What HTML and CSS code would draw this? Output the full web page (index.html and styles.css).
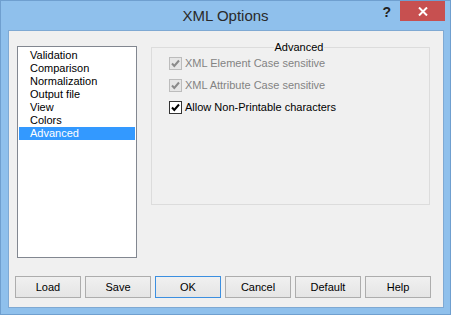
FILE: index.html
```html
<!DOCTYPE html>
<html lang="en">
<head>
    <meta charset="UTF-8">
    <title>XML Options</title>
    <link rel="stylesheet" href="styles.css">
</head>
<body>
    <div class="window">
        <div class="titlebar">
            <div></div>
            <div class="title">XML Options</div>
            <div class="controls">
                <span class="help-btn">?</span>
                <span class="close-btn">
                    <svg width="10" height="9" viewBox="0 0 10 9">
                        <path d="M1 0.5 L9 8.5 M9 0.5 L1 8.5" stroke="#fff" stroke-width="2"/>
                    </svg>
                </span>
            </div>
        </div>

        <div class="client">
            <div class="main">
                <ul class="page-list">
                    <li>Validation</li>
                    <li>Comparison</li>
                    <li>Normalization</li>
                    <li>Output file</li>
                    <li>View</li>
                    <li>Colors</li>
                    <li class="selected">Advanced</li>
                </ul>

                <fieldset class="group">
                    <legend>Advanced</legend>
                    <div class="check-row disabled">
                        <span class="check">
                            <svg width="11" height="11" viewBox="0 0 11 11"><path d="M2 5.5 L4.3 8 L9 2.5" fill="none" stroke="#8a8a8a" stroke-width="2"/></svg>
                        </span>
                        XML Element Case sensitive
                    </div>
                    <div class="check-row disabled">
                        <span class="check">
                            <svg width="11" height="11" viewBox="0 0 11 11"><path d="M2 5.5 L4.3 8 L9 2.5" fill="none" stroke="#8a8a8a" stroke-width="2"/></svg>
                        </span>
                        XML Attribute Case sensitive
                    </div>
                    <div class="check-row">
                        <span class="check">
                            <svg width="11" height="11" viewBox="0 0 11 11"><path d="M2 5.5 L4.3 8 L9 2.5" fill="none" stroke="#000" stroke-width="2"/></svg>
                        </span>
                        Allow Non-Printable characters
                    </div>
                </fieldset>
            </div>

            <div class="buttons">
                <button type="button" class="btn">Load</button>
                <button type="button" class="btn">Save</button>
                <button type="button" class="btn default-btn">OK</button>
                <button type="button" class="btn">Cancel</button>
                <button type="button" class="btn">Default</button>
                <button type="button" class="btn">Help</button>
            </div>
        </div>
    </div>
</body>
</html>
```

FILE: styles.css
```css
body {
    margin: 0;
    padding: 0;
    font-family: "Liberation Sans", Arial, sans-serif;
    font-size: 11px;
    background-color: #fff;
}

.window {
    width: 451px;
    height: 315px;
    box-sizing: border-box;
    border: 1px solid #6f9fcf;
    background: #8fc0ec;
    display: flex;
    flex-direction: column;
}

.titlebar {
    height: 29px;
    display: grid;
    grid-template-columns: 1fr auto 1fr;
}

.title {
    font-size: 15px;
    color: #2a2a2a;
    line-height: 29px;
}

.controls {
    justify-self: end;
    display: flex;
    align-items: flex-start;
    margin-right: 5px;
}

.help-btn {
    font-weight: bold;
    font-size: 14px;
    color: #222;
    margin-right: 9px;
    margin-top: 3px;
}

.close-btn {
    width: 45px;
    height: 20px;
    background: #c75050;
    display: flex;
    align-items: center;
    justify-content: center;
}

.client {
    flex: 1;
    margin: 0 6px 6px 7px;
    border: 1px solid #7fa9d3;
    background: #f0f0f0;
    padding: 9px 8px 9px 8px;
    display: flex;
    flex-direction: column;
}

.main {
    display: flex;
    gap: 14px;
}

.page-list {
    list-style: none;
    margin: 6px 0 0 0;
    padding: 2px 1px;
    width: 120px;
    height: 212px;
    box-sizing: border-box;
    border: 1px solid #828790;
    background: #fff;
}

.page-list li {
    height: 13px;
    line-height: 13px;
    padding-left: 11px;
    color: #000;
}

.page-list li.selected {
    background: #3399ff;
    color: #fff;
}

.group {
    margin: 0;
    width: 279px;
    height: 165px;
    box-sizing: border-box;
    border: 1px solid #dcdcdc;
    padding: 0 0 0 17px;
    display: flex;
    flex-direction: column;
    gap: 4px;
}

.group legend {
    margin: 0 auto;
    padding: 0 1px;
    line-height: 14px;
    color: #000;
}

.check-row {
    height: 18px;
    display: flex;
    align-items: center;
    color: #000;
}

.check {
    width: 13px;
    height: 13px;
    box-sizing: border-box;
    border: 1px solid #333;
    background: #fff;
    margin-right: 3px;
    display: flex;
    align-items: center;
    justify-content: center;
}

.check-row.disabled {
    color: #838383;
}

.check-row.disabled .check {
    border-color: #bcbcbc;
    background: #e6e6e6;
}

.buttons {
    margin-top: auto;
    margin-left: -2px;
    display: flex;
    gap: 4px;
}

.btn {
    width: 66px;
    height: 22px;
    margin: 0;
    padding: 0;
    font-family: "Liberation Sans", Arial, sans-serif;
    font-size: 11px;
    color: #000;
    border: 1px solid #adadad;
    background: linear-gradient(#f0f0f0, #e5e5e5);
}

.default-btn {
    border-color: #3c8fe0;
}
```
